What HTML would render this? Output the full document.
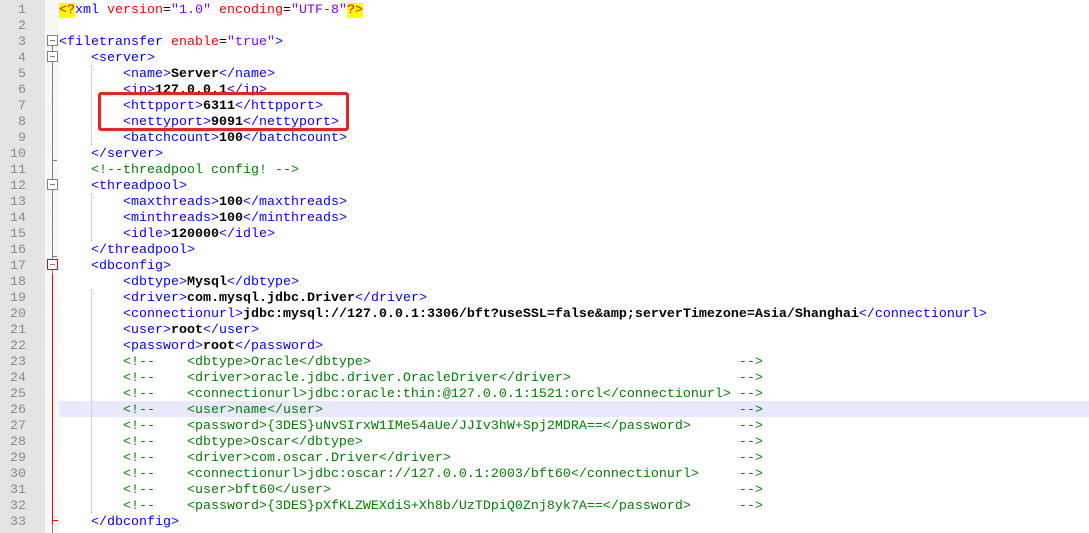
<!DOCTYPE html>
<html><head><meta charset="utf-8"><style>
html,body{margin:0;padding:0;width:1089px;height:533px;overflow:hidden;background:#fff;font-family:"Liberation Mono",monospace;}
#nums{position:absolute;left:0;top:0;width:45px;height:533px;background:#e4e4e4;}
#fold{position:absolute;left:45px;top:0;width:14px;height:533px;background:repeating-linear-gradient(45deg,#f3f3f3 0 1px,#fdfdfd 1px 2px);}
pre{margin:0;position:absolute;top:3px;font-size:13.33px;line-height:16px;font-family:"Liberation Mono",monospace;}
#ln{left:0;width:26px;text-align:right;color:#8a8a8a;}
#code{left:59px;color:#000;}
.t{color:#0000ff}.a{color:#ff0000}.v{color:#8000ff}.b{font-weight:bold}.c{color:#008000}
.y{background:#ffff00;color:#ff0000}
.hl{position:absolute;left:59px;right:0;top:401px;height:16px;background:#e8e8ff;}
.box{position:absolute;left:47px;width:9px;height:9px;border:1px solid #808080;background:#fff;}
.box:after{content:"";position:absolute;left:2px;top:4px;width:5px;height:1px;background:#808080;}
.vl{position:absolute;left:52px;width:1px;background:#808080;}
.g{position:absolute;left:91px;width:0;border-left:1px dotted #b0b0b0;}
#rb{position:absolute;left:98px;top:92px;width:245px;height:33px;border:3px solid #f02020;border-radius:3px;}
</style></head><body>
<div id="nums"></div><div id="fold"></div>
<div class="hl"></div>
<div class="vl" style="top:45px;height:488px"></div>
<div class="vl" style="top:160px;width:5px;height:1px"></div>
<div class="vl" style="top:256px;width:5px;height:1px"></div>
<div class="vl" style="top:274px;height:250px;background:#ff0000"></div>
<div class="vl" style="top:520px;width:6px;height:1px;background:#ff0000"></div>
<div class="box" style="top:35px"></div>
<div class="box" style="top:51px"></div>
<div class="box" style="top:179px"></div>
<div class="box" style="top:259px;border-color:#ff0000"></div>
<div class="g" style="top:65px;height:80px"></div>
<div class="g" style="top:193px;height:48px"></div>
<div class="g" style="top:289px;height:224px"></div>
<pre id="ln">1
2
3
4
5
6
7
8
9
10
11
12
13
14
15
16
17
18
19
20
21
22
23
24
25
26
27
28
29
30
31
32
33</pre>
<pre id="code"><span class="y">&lt;?</span><span class="t">xml</span> <span class="a">version</span>=<span class="v">"1.0"</span> <span class="a">encoding</span>=<span class="v">"UTF-8"</span><span class="y">?&gt;</span>

<span class="t">&lt;filetransfer</span> <span class="a">enable</span>=<span class="v">"true"</span><span class="t">&gt;</span>
    <span class="t">&lt;server&gt;</span>
        <span class="t">&lt;name&gt;</span><span class="b">Server</span><span class="t">&lt;/name&gt;</span>
        <span class="t">&lt;ip&gt;</span><span class="b">127.0.0.1</span><span class="t">&lt;/ip&gt;</span>
        <span class="t">&lt;httpport&gt;</span><span class="b">6311</span><span class="t">&lt;/httpport&gt;</span>
        <span class="t">&lt;nettyport&gt;</span><span class="b">9091</span><span class="t">&lt;/nettyport&gt;</span>
        <span class="t">&lt;batchcount&gt;</span><span class="b">100</span><span class="t">&lt;/batchcount&gt;</span>
    <span class="t">&lt;/server&gt;</span>
    <span class="c">&lt;!--threadpool config! --&gt;</span>
    <span class="t">&lt;threadpool&gt;</span>
        <span class="t">&lt;maxthreads&gt;</span><span class="b">100</span><span class="t">&lt;/maxthreads&gt;</span>
        <span class="t">&lt;minthreads&gt;</span><span class="b">100</span><span class="t">&lt;/minthreads&gt;</span>
        <span class="t">&lt;idle&gt;</span><span class="b">120000</span><span class="t">&lt;/idle&gt;</span>
    <span class="t">&lt;/threadpool&gt;</span>
    <span class="t">&lt;dbconfig&gt;</span>
        <span class="t">&lt;dbtype&gt;</span><span class="b">Mysql</span><span class="t">&lt;/dbtype&gt;</span>
        <span class="t">&lt;driver&gt;</span><span class="b">com.mysql.jdbc.Driver</span><span class="t">&lt;/driver&gt;</span>
        <span class="t">&lt;connectionurl&gt;</span><span class="b">jdbc:mysql://127.0.0.1:3306/bft?useSSL=false&amp;amp;serverTimezone=Asia/Shanghai</span><span class="t">&lt;/connectionurl&gt;</span>
        <span class="t">&lt;user&gt;</span><span class="b">root</span><span class="t">&lt;/user&gt;</span>
        <span class="t">&lt;password&gt;</span><span class="b">root</span><span class="t">&lt;/password&gt;</span>
<span class="c">        &lt;!--    &lt;dbtype&gt;Oracle&lt;/dbtype&gt;                                              --&gt;
        &lt;!--    &lt;driver&gt;oracle.jdbc.driver.OracleDriver&lt;/driver&gt;                     --&gt;
        &lt;!--    &lt;connectionurl&gt;jdbc:oracle:thin:@127.0.0.1:1521:orcl&lt;/connectionurl&gt; --&gt;
        &lt;!--    &lt;user&gt;name&lt;/user&gt;                                                    --&gt;
        &lt;!--    &lt;password&gt;{3DES}uNvSIrxW1IMe54aUe/JJIv3hW+Spj2MDRA==&lt;/password&gt;      --&gt;
        &lt;!--    &lt;dbtype&gt;Oscar&lt;/dbtype&gt;                                               --&gt;
        &lt;!--    &lt;driver&gt;com.oscar.Driver&lt;/driver&gt;                                    --&gt;
        &lt;!--    &lt;connectionurl&gt;jdbc:oscar://127.0.0.1:2003/bft60&lt;/connectionurl&gt;     --&gt;
        &lt;!--    &lt;user&gt;bft60&lt;/user&gt;                                                   --&gt;
        &lt;!--    &lt;password&gt;{3DES}pXfKLZWEXdiS+Xh8b/UzTDpiQ0Znj8yk7A==&lt;/password&gt;      --&gt;</span>
    <span class="t">&lt;/dbconfig&gt;</span></pre>
<div id="rb"></div>
</body></html>
